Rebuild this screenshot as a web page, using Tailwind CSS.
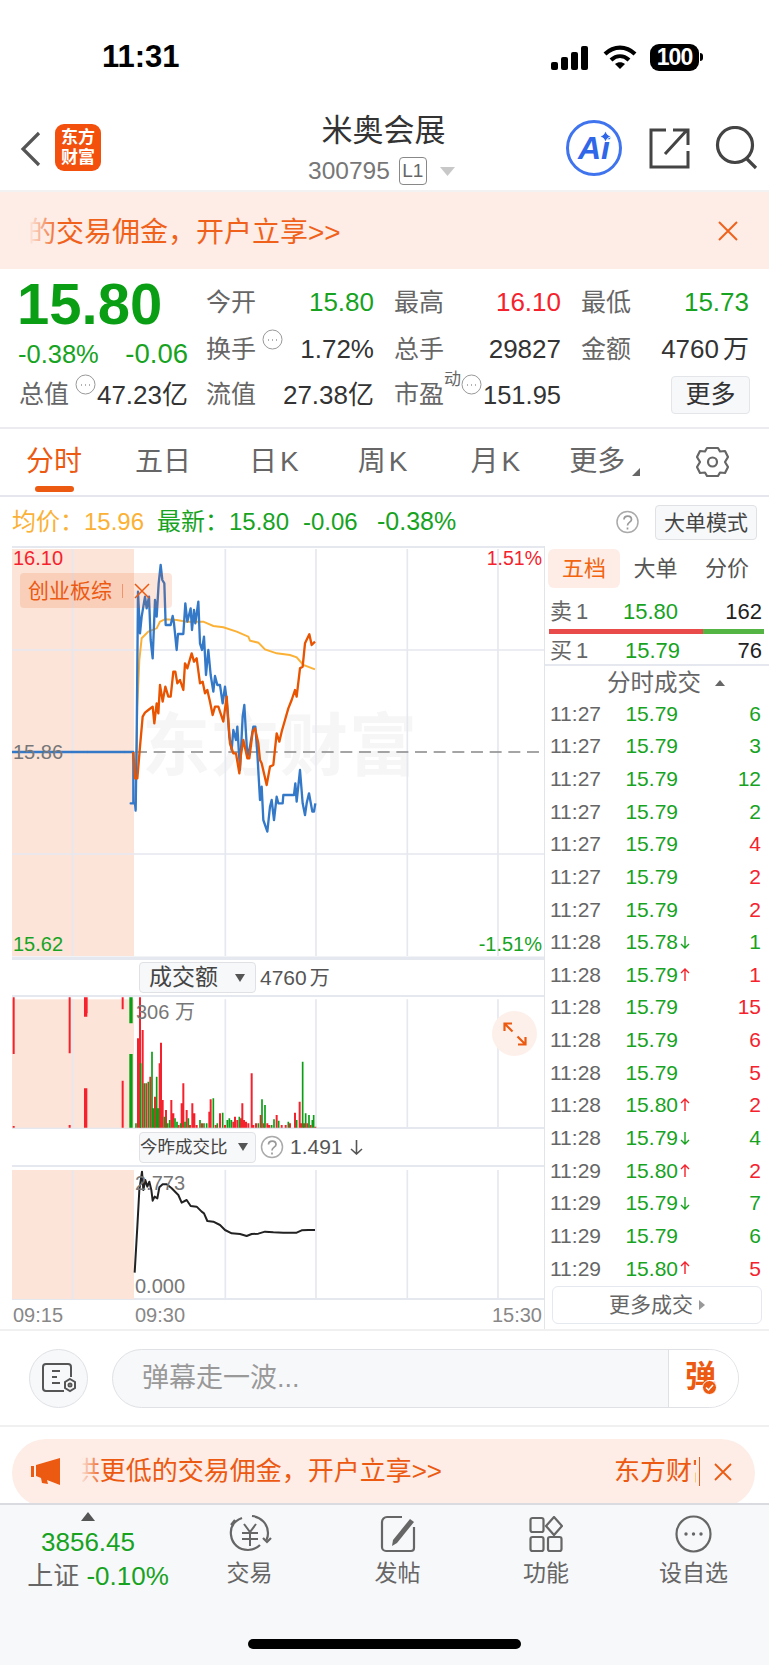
<!DOCTYPE html>
<html lang="zh">
<head>
<meta charset="utf-8">
<script src="https://cdn.jsdelivr.net/npm/@tailwindcss/browser@4"></script>
</head>
<body>
<div class="relative w-[769px] h-[1665px] overflow-hidden bg-white text-[#555] font-['Liberation_Sans','Noto_Sans_CJK_SC',sans-serif]">

<!-- status -->
<div class="h-[105px] flex items-start pt-[38px] pl-[102px]">
  <span class="text-[31px] leading-[38px] font-bold text-black w-[76px]">11:31</span>
  <svg class="ml-[373px] mt-[8px]" width="39" height="24" viewBox="0 0 39 24" fill="#000"><rect x="0" y="16" width="7" height="8" rx="2"/><rect x="10" y="11" width="7" height="13" rx="2"/><rect x="20" y="6" width="7" height="18" rx="2"/><rect x="30" y="0" width="7" height="24" rx="2"/></svg>
  <svg class="ml-[13px] mt-[7px]" width="34" height="25" viewBox="0 0 34 25" fill="none" stroke="#000" stroke-width="4.2"><path d="M2 9c9-8.500 21-8.500 30 0"/><path d="M8 15c5.500-5 12.500-5 18 0"/><path d="M17 24l-5-5c3-2.500 7-2.500 10 0z" fill="#000" stroke="none"/></svg>
  <div class="ml-[13px] mt-[6px] w-[49px] h-[27px] rounded-[9px] bg-black flex items-center justify-center text-white text-[23px] font-bold leading-none tracking-[-1px]">100</div>
  <div class="ml-[1px] mt-[15px] w-[3px] h-[8px] rounded-r bg-black"></div>
</div>

<!-- nav -->
<div class="relative h-[87px] border-b-2 border-[#f2f2f2]">
  <svg class="absolute left-[20px] top-[26px]" width="22" height="36" viewBox="0 0 22 36" fill="none" stroke="#555" stroke-width="3.200"><path d="M19 2L3 18l16 16"/></svg>
  <div class="absolute left-[55px] top-[19px] w-[46px] h-[47px] rounded-[9px] bg-[#f2500c] flex flex-col items-center justify-center text-white text-[17px] leading-[20px] font-bold"><span>东方</span><span>财富</span></div>
  <div class="flex flex-col items-center">
    <div class="text-[31px] leading-[40px] mt-[6px] text-[#333] pr-[2px]">米奥会展</div>
    <div class="flex items-center mt-[6px] text-[24.500px] leading-[28px] text-[#777] pr-[6px]">
      <span>300795</span>
      <span class="ml-[9px] w-[28px] h-[28px] rounded-[4px] border border-[#888] flex items-center justify-center text-[19px] text-[#666]">L1</span>
      <svg class="ml-[13px]" width="15" height="9" viewBox="0 0 15 9" fill="#c8c8c8"><path d="M0 0h15L7.500 9z"/></svg>
    </div>
  </div>
  <div class="absolute left-[566px] top-[15px] w-[56px] h-[56px] rounded-full border-[3px] border-[#3f74ee] flex items-center justify-center text-[#2f67e8] text-[32px] font-bold italic leading-none">Ai</div>
  <svg class="absolute left-[600px] top-[26px]" width="11" height="11" viewBox="0 0 11 11" fill="#2f67e8" stroke="#fff"><path d="M5.500 0l2 3.500 3.500 2-3.500 2-2 3.500-2-3.500L0 5.500l3.500-2z"/></svg>
  <svg class="absolute left-[648px] top-[22px]" width="42" height="42" viewBox="0 0 42 42" fill="none" stroke="#444" stroke-width="3"><path d="M18 3H3v37h37V24"/><path d="M17 27L39 3M25 3h15v15" /></svg>
  <svg class="absolute left-[715px] top-[21px]" width="44" height="44" viewBox="0 0 44 44" fill="none" stroke="#444" stroke-width="3.200"><circle cx="20" cy="19" r="17.500"/><path d="M32 33l9 9"/></svg>
</div>

<!-- banner -->
<div class="relative h-[77px] bg-[#fdede6] overflow-hidden">
  <div class="absolute left-[28px] top-[2px] h-full flex items-center text-[28px] text-[#f0621c] whitespace-nowrap">的交易佣金，开户立享&gt;&gt;</div>
  <div class="absolute left-[28px] top-0 w-[30px] h-full bg-gradient-to-r from-[#fdede6] to-transparent"></div>
  <svg class="absolute left-[717px] top-[28px]" width="22" height="22" viewBox="0 0 22 22" fill="none" stroke="#f0621c" stroke-width="2"><path d="M2 2l18 18M20 2L2 20"/></svg>
</div>

<!-- quote -->
<div class="h-[160px] border-b-2 border-[#ececf0] relative">
  <div class="flex">
    <div class="w-[188px] pl-[17px]">
      <div class="text-[58px] leading-[62px] mt-[4px] font-bold text-[#0a9e14]">15.80</div>
      <div class="flex justify-between items-center h-[30px] text-[25.500px] mt-[4px] text-[#17a31f]"><span class="pl-[1px]">-0.38%</span><span class="text-[27.500px]">-0.06</span></div>
    </div>
    <div class="ml-[18px] w-[544px] mt-[10px]">
      <div class="flex gap-[20px] h-[47px] items-center text-[26px]">
        <div class="w-[168px] flex justify-between items-center"><span class="text-[#666] text-[25px]">今开</span><span class="text-[#17a31f]">15.80</span></div>
        <div class="w-[167px] flex justify-between items-center"><span class="text-[#666] text-[25px]">最高</span><span class="text-[#f5222d]">16.10</span></div>
        <div class="w-[168px] flex justify-between items-center"><span class="text-[#666] text-[25px]">最低</span><span class="text-[#17a31f]">15.73</span></div>
      </div>
      <div class="flex gap-[20px] h-[47px] items-center text-[26px]">
        <div class="w-[168px] flex justify-between items-center"><span class="flex items-start text-[#666] text-[25px]">换手<svg class="ml-[6px] mt-[-2px]" width="21" height="21" viewBox="0 0 21 21" fill="none" stroke="#999"><circle cx="10.500" cy="10.500" r="9.500"/><path d="M6 11h1M10 11h1M14 11h1" stroke-width="1.500"/></svg></span><span class="text-[#333]">1.72%</span></div>
        <div class="w-[167px] flex justify-between items-center"><span class="text-[#666] text-[25px]">总手</span><span class="text-[#333]">29827</span></div>
        <div class="w-[168px] flex justify-between items-center"><span class="text-[#666] text-[25px]">金额</span><span class="text-[#333]">4760<span class="ml-[4px]">万</span></span></div>
      </div>
    </div>
  </div>
  <div class="flex items-center h-[46px] mt-[-1px] text-[26px]">
    <div class="ml-[19px] w-[169px] flex justify-between items-center"><span class="flex items-start text-[#666] text-[25px]">总值<svg class="ml-[6px] mt-[-2px]" width="21" height="21" viewBox="0 0 21 21" fill="none" stroke="#999"><circle cx="10.500" cy="10.500" r="9.500"/><path d="M6 11h1M10 11h1M14 11h1" stroke-width="1.500"/></svg></span><span class="text-[#333]">47.23亿</span></div>
    <div class="ml-[18px] w-[168px] flex justify-between items-center"><span class="text-[#666] text-[25px]">流值</span><span class="text-[#333]">27.38亿</span></div>
    <div class="ml-[20px] w-[167px] flex justify-between items-center"><span class="flex items-start shrink-0 whitespace-nowrap mr-[-2px] text-[#666] text-[25px]">市盈<span class="text-[17px] leading-[20px] mt-[-6px]">动</span><svg class="mt-[-2px] shrink-0" width="21" height="21" viewBox="0 0 21 21" fill="none" stroke="#999"><circle cx="10.500" cy="10.500" r="9.500"/><path d="M6 11h1M10 11h1M14 11h1" stroke-width="1.500"/></svg></span><span class="text-[#333] text-[25.500px]">151.95</span></div>
    <div class="ml-[110px] w-[79px] h-[38px] rounded-[4px] border border-[#e3e5e8] bg-[#f7f8fa] flex items-center justify-center text-[25px] text-[#333]">更多</div>
  </div>
</div>

<!-- tabs -->
<div class="relative h-[68px] border-b-2 border-[#e6e6ee] flex items-center pl-[26px] text-[28px] text-[#666]">
  <span class="text-[#ec5a12]">分时</span>
  <span class="ml-[53px]">五日</span>
  <span class="ml-[58px]">日<span class="ml-[3px]">K</span></span>
  <span class="ml-[59px]">周<span class="ml-[3px]">K</span></span>
  <span class="ml-[63px]">月<span class="ml-[3px]">K</span></span>
  <span class="ml-[49px]">更多</span>
  <svg class="ml-[7px] mt-[20px]" width="8" height="8" viewBox="0 0 8 8" fill="#666"><path d="M8 0v8H0z"/></svg>
  <div class="absolute left-[35px] top-[57px] w-[39px] h-[6px] rounded-full bg-[#ec5a12]"></div>
  <svg class="absolute left-[696px] top-[17px]" width="33" height="32" viewBox="0 0 33 32" fill="none" stroke="#666" stroke-width="2.200"><path d="M11 2h11l2 3.500 5-.5 3 6-3 5 3 5-3 6-5-.5-2 3.500H11l-2-3.500-5 .5-3-6 3-5-3-5 3-6 5 .5z" stroke-linejoin="round"/><circle cx="16.500" cy="16" r="4.500"/></svg>
</div>

<!-- price line -->
<div class="relative h-[49px] flex items-center pl-[12px] text-[24px] whitespace-nowrap">
  <span class="text-[#fbb136] w-[72px]">均价：</span>
  <span class="text-[#fbb136] w-[73px]">15.96</span>
  <span class="text-[#17a31f] w-[72px]">最新：</span>
  <span class="text-[#17a31f] w-[74px]">15.80</span>
  <span class="text-[#17a31f] w-[74px]">-0.06</span>
  <span class="text-[#17a31f] text-[25px]">-0.38%</span>
  <svg class="absolute left-[616px] top-[13px]" width="23" height="24" viewBox="0 0 23 24" fill="none"><circle cx="11.500" cy="12" r="10.500" stroke="#aaa" stroke-width="1.500"/><path d="M8 9.500c0-4.500 7.500-4.500 7.500 0 0 2.800-4 2.500-4 6M11.500 17.500v2" stroke="#999" stroke-width="1.700"/></svg>
  <div class="absolute left-[655px] top-[8px] w-[102px] h-[35px] rounded-[4px] border border-[#dfe1e5] bg-[#f7f8fa] flex items-center justify-center text-[21px] text-[#444]">大单模式</div>
</div>

<!-- main -->
<div class="flex h-[783px]">
  <div class="w-[545px] border-r border-[#e2e4ea] pl-[12px]">
    <!-- price chart -->
    <div class="relative h-[412px] border-t-2 border-[#e6e8f0]">
      <div class="absolute left-[130px] top-[158px] text-[#f6f6f6] text-[68px] leading-[80px] font-bold tracking-[1px] whitespace-nowrap">东方财富</div>
      <svg class="absolute left-[-12px] top-[-2px]" width="545" height="412" viewBox="0 0 545 412" fill="none">
        <g transform="translate(0 -6) scale(.33333)">
          <rect x="36" y="27" width="366" height="1221" fill="#fce4d8"/>
          <path d="M218 27V1248M676 27V1248M948 27V1248M1222 27V1248M1494 27V1248M36 330H1632M36 942H1632M36 1252H1632" stroke="#e6e8f0" stroke-width="5"/>
          <path d="M405 636H1632" stroke="#888" stroke-width="4" stroke-dasharray="36 20"/>
          <polyline points="400,790 407,790 412,500 418,360 425,295 445,275 470,265 480,245 495,238 530,240 560,245 610,245 640,258 670,262 710,275 745,290 750,302 775,308 795,328 830,340 870,345 890,352 910,375 945,388" stroke="#fbb136" stroke-width="6"/>
          <polyline points="36,636 400,636 400,790 392,790 405,790 407,812 410,600 414,155 420,280 425,230 435,170 440,205 447,170 452,300 458,355 465,180 470,230 476,130 482,75 487,120 493,130 497,255 512,255 518,228 522,250 530,330 534,282 550,282 556,190 562,245 572,205 576,270 582,210 586,250 595,185 600,310 606,330 612,290 618,405 625,330 632,405 640,455 645,408 652,435 660,435 668,490 675,440 680,480 688,590 695,630 700,570 708,600 712,560 720,690 728,530 733,495 742,650 750,620 760,560 766,560 772,640 780,780 785,740 790,840 802,875 810,800 815,780 822,840 830,770 835,790 848,790 850,765 882,765 886,730 890,785 900,690 908,790 915,825 920,790 927,760 937,815 942,815 946,790" stroke="#3478c8" stroke-width="7" stroke-linejoin="round"/>
          <path d="M46 636h.1M215 636h.1M262 636h.1M373 636h.1" stroke="#3478c8" stroke-width="13"/>
          <polyline points="400,636 405,715 412,715 420,620 428,530 435,518 445,510 458,500 463,550 470,490 475,520 480,435 488,485 496,440 505,470 512,470 520,395 526,395 532,430 540,420 550,450 555,370 562,385 575,340 582,365 590,355 600,430 608,425 615,460 622,450 630,485 638,525 645,500 655,500 670,545 680,470 690,610 700,640 708,640 718,700 722,650 730,600 742,655 748,655 758,575 765,565 775,610 780,660 785,670 800,735 810,680 820,675 830,580 838,605 845,575 855,540 865,505 875,480 885,450 890,470 900,385 908,380 915,310 928,283 935,315 945,305" stroke="#e85400" stroke-width="7" stroke-linejoin="round"/>
        </g>
      </svg>
      <span class="absolute left-0 top-[-2px] text-[20px] leading-[24px] text-[#f5222d] ml-[1px]">16.10</span>
      <span class="absolute right-[2px] top-[-2px] text-[19.500px] leading-[24px] text-[#f5222d]">1.51%</span>
      <span class="absolute left-0 top-[192px] text-[20px] leading-[24px] text-[#777] ml-[1px]">15.86</span>
      <span class="absolute left-0 top-[384px] text-[20px] leading-[24px] text-[#17a31f] ml-[1px]">15.62</span>
      <span class="absolute right-[2px] top-[384px] text-[20px] leading-[24px] text-[#17a31f]">-1.51%</span>
      <div class="absolute left-[8px] top-[25px] w-[152px] h-[35px] rounded-[4px] bg-[#ec5a12]/15 flex items-center pl-[8px] text-[21px] text-[#ec5a12]">
        <span>创业板综</span><span class="ml-[10px] w-[1px] h-[14px] bg-[#ec5a12]/50"></span>
        <svg class="ml-[11px]" width="16" height="16" viewBox="0 0 16 16" fill="none" stroke="#ec5a12" stroke-width="1.500"><path d="M1 1l14 14M15 1L1 15"/></svg>
      </div>
    </div>
    <!-- head 1 -->
    <div class="h-[39px] border-y-2 border-[#e6e8f0] flex items-center pl-[127px]">
      <div class="w-[117px] h-[31px] rounded-[4px] border border-[#dfe1e5] bg-[#f7f8fa] flex items-center pl-[9px] text-[23px] text-[#444]">成交额<svg class="ml-[17px]" width="10" height="8" viewBox="0 0 10 8" fill="#555"><path d="M0 0h10L5 8z"/></svg></div>
      <span class="ml-[4px] text-[21px] text-[#555]">4760<span class="ml-[3px] text-[20px]">万</span></span>
    </div>
    <!-- volume -->
    <div class="relative h-[132px] border-b-2 border-[#e6e8f0]">
      <svg class="absolute left-[-12px] top-0" width="545" height="132" viewBox="0 0 545 132" fill="none">
        <g transform="translate(0 -47) scale(.33333)">
          <rect x="36" y="148" width="366" height="385" fill="#fce4d8"/>
          <path d="M218 148V533M676 148V533M948 148V533M1222 148V533M1494 148V533" stroke="#e6e8f0" stroke-width="5"/>
          <path d="M41 142V312M41 528V533M209 142V310M209 525V533M368 142V178M368 392V533M420 142V533M414 533V265M428 533V240M439 533V400M451 533V380M465 533V440M479 533V340M483 533V278M488 533V450M498 533V480M514 533V450M520 533V490M536 533V525M550 533V400M545 533V460M560 533V480M570 533V525M577 533V460M583 533V490M590 533V525M606 533V520M628 533V485M632 533V448M647 533V525M660 533V490M675 533V525M700 533V515M705 533V500M712 533V510M723 533V505M727 533V460M732 533V510M738 533V515M745 533V520M755 533V370M760 533V525M768 533V520M782 533V495M791 533V520M802 533V520M808 533V525M830 533V495M845 533V525M857 533V525M870 533V520M885 533V488M899 533V455M903 533V520M912 533V520M922 533V520M932 533V525M946 533V530" stroke="#f5222d" stroke-width="6"/>
          <path d="M257 142V200M257 415V533M258 142V190" stroke="#f5222d" stroke-width="10"/>
          <path d="M393 142V220M393 312V533" stroke="#0a9e14" stroke-width="10"/>
          <path d="M408 533V520M422 533V340M433 533V400M445 533V395M456 533V305M461 533V475M470 533V380M475 533V475M493 533V500M503 533V520M509 533V510M525 533V505M531 533V515M542 533V520M555 533V515M565 533V505M600 533V510M612 533V520M620 533V520M640 533V445M652 533V520M668 533V488M682 533V510M688 533V505M694 533V510M718 533V500M775 533V520M786 533V448M795 533V465M815 533V525M822 533V508M836 533V512M865 533V515M890 533V510M908 533V335M917 533V490M927 533V495M937 533V510M941 533V495" stroke="#0a9e14" stroke-width="5"/>
        </g>
      </svg>
      <span class="absolute left-[124px] top-[3px] text-[20px] leading-[24px] text-[#777]">306 万</span>
      <div class="absolute left-[480px] top-[14px] w-[45px] h-[45px] rounded-full bg-[#fdf0ea] flex items-center justify-center">
        <svg width="24" height="24" viewBox="0 0 24 24" fill="none" stroke="#ec5a12" stroke-width="2.200"><path d="M1.500 9V1.500H9M1.500 1.500l8 8M22.500 15v7.500H15M22.500 22.500l-8-8"/></svg>
      </div>
    </div>
    <!-- head 2 -->
    <div class="h-[38px] border-b-2 border-[#e6e8f0] flex items-center pl-[127px]">
      <div class="w-[117px] h-[31px] rounded-[4px] border border-[#dfe1e5] bg-[#f7f8fa] flex items-center text-[17.500px] text-[#444] whitespace-nowrap">今昨成交比<svg class="ml-[10px]" width="10" height="8" viewBox="0 0 10 8" fill="#555"><path d="M0 0h10L5 8z"/></svg></div>
      <svg class="ml-[4px]" width="24" height="24" viewBox="0 0 23 24" fill="none"><circle cx="11.500" cy="12" r="10.500" stroke="#aaa" stroke-width="1.500"/><path d="M8 9.500c0-4.500 7.500-4.500 7.500 0 0 2.800-4 2.500-4 6M11.500 17.500v2" stroke="#999" stroke-width="1.700"/></svg>
      <span class="ml-[6px] text-[21px] text-[#555]">1.491</span>
      <svg class="ml-[7px]" width="13" height="16" viewBox="0 0 13 16" fill="none" stroke="#555" stroke-width="1.600"><path d="M6.500 1v14M1 10l5.500 5 5.500-5"/></svg>
    </div>
    <!-- ratio -->
    <div class="relative h-[133px] border-b-2 border-[#e6e8f0]">
      <svg class="absolute left-[-12px] top-0" width="545" height="133" viewBox="0 0 545 133" fill="none">
        <g transform="translate(0 -217) scale(.33333)">
          <rect x="36" y="660" width="366" height="387" fill="#fce4d8"/>
          <path d="M218 660V1047M676 660V1047M948 660V1047M1222 660V1047M1494 660V1047" stroke="#e6e8f0" stroke-width="5"/>
          <polyline points="404,968 412,830 418,720 426,665 430,720 436,690 442,710 448,695 454,720 458,752 464,740 472,745 478,712 488,703 500,703 515,715 535,735 545,758 560,750 572,768 590,770 605,785 612,790 622,813 640,815 660,825 675,840 695,850 720,852 740,858 755,852 775,851 795,845 820,847 850,848 890,848 905,841 925,840 945,840" stroke="#222" stroke-width="6" stroke-linejoin="round"/>
        </g>
      </svg>
      <span class="absolute left-[123px] top-[4px] text-[20px] leading-[24px] text-[#777]">2.773</span>
      <span class="absolute left-[123px] top-[107px] text-[20px] leading-[24px] text-[#777]">0.000</span>
    </div>
    <!-- axis -->
    <div class="h-[29px] flex items-center text-[20px] text-[#888]">
      <span class="ml-[1px] w-[122px]">09:15</span><span>09:30</span><span class="ml-auto mr-[2px]">15:30</span>
    </div>
  </div>

  <!-- right panel -->
  <div class="flex-1 relative">
    <div class="h-[118px]">
      <div class="flex pt-[3px] pl-[3px] text-[22px] leading-[39px] text-center">
        <div class="w-[72px] h-[39px] rounded-[6px] bg-[#fdede6] text-[#f2640f]">五档</div>
        <div class="w-[71px] text-[#555]">大单</div>
        <div class="w-[72px] text-[#555]">分价</div>
      </div>
      <div class="flex items-center h-[24px] mt-[11px] pl-[5px] pr-[7px] text-[22px]"><span class="w-[73px] text-[#666]">卖<span class="ml-[4px]">1</span></span><span class="text-[#17a31f]">15.80</span><span class="ml-auto text-[#222]">162</span></div>
      <div class="mx-[4px] mt-[6px] w-[215px] h-[5px] flex"><div class="w-[154px] bg-[#e94b4b]"></div><div class="flex-1 bg-[#55b544]"></div></div>
      <div class="flex items-center h-[24px] mt-[4px] pl-[5px] pr-[7px] text-[22px]"><span class="w-[75px] text-[#666]">买<span class="ml-[4px]">1</span></span><span class="text-[#17a31f]">15.79</span><span class="ml-auto text-[#222]">76</span></div>
    </div>
    <div class="h-[33px] border-t-2 border-[#e6e8f0] flex items-start justify-center pt-[3px] pl-[18px] text-[23.500px] leading-[28px] text-[#666]">
      <span>分时成交</span><svg class="ml-[14px] mt-[11px]" width="10" height="6" viewBox="0 0 10 6" fill="#666"><path d="M5 0l5 6H0z"/></svg>
    </div>
    <div class="text-[21px] pl-[5px] pr-[8px]">
      <div class="flex items-center h-[32.670px]"><span class="w-[75px] text-[#666]">11:27</span><span class="w-[53px] text-right text-[#17a31f]">15.79</span><span class="ml-auto text-[#17a31f]">6</span></div>
      <div class="flex items-center h-[32.670px]"><span class="w-[75px] text-[#666]">11:27</span><span class="w-[53px] text-right text-[#17a31f]">15.79</span><span class="ml-auto text-[#17a31f]">3</span></div>
      <div class="flex items-center h-[32.670px]"><span class="w-[75px] text-[#666]">11:27</span><span class="w-[53px] text-right text-[#17a31f]">15.79</span><span class="ml-auto text-[#17a31f]">12</span></div>
      <div class="flex items-center h-[32.670px]"><span class="w-[75px] text-[#666]">11:27</span><span class="w-[53px] text-right text-[#17a31f]">15.79</span><span class="ml-auto text-[#17a31f]">2</span></div>
      <div class="flex items-center h-[32.670px]"><span class="w-[75px] text-[#666]">11:27</span><span class="w-[53px] text-right text-[#17a31f]">15.79</span><span class="ml-auto text-[#f5222d]">4</span></div>
      <div class="flex items-center h-[32.670px]"><span class="w-[75px] text-[#666]">11:27</span><span class="w-[53px] text-right text-[#17a31f]">15.79</span><span class="ml-auto text-[#f5222d]">2</span></div>
      <div class="flex items-center h-[32.670px]"><span class="w-[75px] text-[#666]">11:27</span><span class="w-[53px] text-right text-[#17a31f]">15.79</span><span class="ml-auto text-[#f5222d]">2</span></div>
      <div class="flex items-center h-[32.670px]"><span class="w-[75px] text-[#666]">11:28</span><span class="w-[53px] text-right text-[#17a31f]">15.78</span><svg class="ml-[2px]" width="10" height="14" viewBox="0 0 10 14" fill="none" stroke="#17a31f" stroke-width="1.400"><path d="M5 1v12M1 9l4 4 4-4"/></svg><span class="ml-auto text-[#17a31f]">1</span></div>
      <div class="flex items-center h-[32.670px]"><span class="w-[75px] text-[#666]">11:28</span><span class="w-[53px] text-right text-[#17a31f]">15.79</span><svg class="ml-[2px]" width="10" height="14" viewBox="0 0 10 14" fill="none" stroke="#f5222d" stroke-width="1.400"><path d="M5 13V1M1 5l4-4 4 4"/></svg><span class="ml-auto text-[#f5222d]">1</span></div>
      <div class="flex items-center h-[32.670px]"><span class="w-[75px] text-[#666]">11:28</span><span class="w-[53px] text-right text-[#17a31f]">15.79</span><span class="ml-auto text-[#f5222d]">15</span></div>
      <div class="flex items-center h-[32.670px]"><span class="w-[75px] text-[#666]">11:28</span><span class="w-[53px] text-right text-[#17a31f]">15.79</span><span class="ml-auto text-[#f5222d]">6</span></div>
      <div class="flex items-center h-[32.670px]"><span class="w-[75px] text-[#666]">11:28</span><span class="w-[53px] text-right text-[#17a31f]">15.79</span><span class="ml-auto text-[#f5222d]">5</span></div>
      <div class="flex items-center h-[32.670px]"><span class="w-[75px] text-[#666]">11:28</span><span class="w-[53px] text-right text-[#17a31f]">15.80</span><svg class="ml-[2px]" width="10" height="14" viewBox="0 0 10 14" fill="none" stroke="#f5222d" stroke-width="1.400"><path d="M5 13V1M1 5l4-4 4 4"/></svg><span class="ml-auto text-[#f5222d]">2</span></div>
      <div class="flex items-center h-[32.670px]"><span class="w-[75px] text-[#666]">11:28</span><span class="w-[53px] text-right text-[#17a31f]">15.79</span><svg class="ml-[2px]" width="10" height="14" viewBox="0 0 10 14" fill="none" stroke="#17a31f" stroke-width="1.400"><path d="M5 1v12M1 9l4 4 4-4"/></svg><span class="ml-auto text-[#17a31f]">4</span></div>
      <div class="flex items-center h-[32.670px]"><span class="w-[75px] text-[#666]">11:29</span><span class="w-[53px] text-right text-[#17a31f]">15.80</span><svg class="ml-[2px]" width="10" height="14" viewBox="0 0 10 14" fill="none" stroke="#f5222d" stroke-width="1.400"><path d="M5 13V1M1 5l4-4 4 4"/></svg><span class="ml-auto text-[#f5222d]">2</span></div>
      <div class="flex items-center h-[32.670px]"><span class="w-[75px] text-[#666]">11:29</span><span class="w-[53px] text-right text-[#17a31f]">15.79</span><svg class="ml-[2px]" width="10" height="14" viewBox="0 0 10 14" fill="none" stroke="#17a31f" stroke-width="1.400"><path d="M5 1v12M1 9l4 4 4-4"/></svg><span class="ml-auto text-[#17a31f]">7</span></div>
      <div class="flex items-center h-[32.670px]"><span class="w-[75px] text-[#666]">11:29</span><span class="w-[53px] text-right text-[#17a31f]">15.79</span><span class="ml-auto text-[#17a31f]">6</span></div>
      <div class="flex items-center h-[32.670px]"><span class="w-[75px] text-[#666]">11:29</span><span class="w-[53px] text-right text-[#17a31f]">15.80</span><svg class="ml-[2px]" width="10" height="14" viewBox="0 0 10 14" fill="none" stroke="#f5222d" stroke-width="1.400"><path d="M5 13V1M1 5l4-4 4 4"/></svg><span class="ml-auto text-[#f5222d]">5</span></div>
    </div>
    <div class="absolute left-[7px] top-[740px] w-[210px] h-[38px] rounded-[6px] border border-[#e6e8f0] flex items-center justify-center text-[21px] text-[#666]">更多成交<svg class="ml-[6px]" width="6" height="10" viewBox="0 0 6 10" fill="#999"><path d="M0 0l6 5-6 5z"/></svg></div>
  </div>
</div>

<!-- input row -->
<div class="h-[98px] border-y-2 border-[#f0f0f0] flex items-center pl-[29px]">
  <div class="w-[59px] h-[59px] rounded-full border border-[#dfe1e5] bg-[#f7f8fa] flex items-center justify-center">
    <svg width="36" height="30" viewBox="0 0 36 30" fill="none" stroke="#555" stroke-width="2"><path d="M30 14V4a3 3 0 0 0-3-3H5a3 3 0 0 0-3 3v21a3 3 0 0 0 3 3h18"/><path d="M11 8h8M11 14h5M11 20h8"/><path d="M29 16l5 3v6l-5 3-5-3v-6z"/><circle cx="29" cy="22" r="1.500"/></svg>
  </div>
  <div class="ml-[24px] w-[627px] h-[59px] rounded-full border border-[#dfe1e5] bg-[#f7f8fa] flex items-center overflow-hidden">
    <span class="ml-[29px] text-[27px] text-[#999]">弹幕走一波...</span>
    <div class="ml-auto w-[70px] h-full bg-white border-l border-[#dfe1e5] relative">
      <span class="absolute left-[16px] top-[7px] text-[31px] leading-[40px] font-bold text-[#ec5a12]">弹</span>
      <svg class="absolute left-[33px] top-[30px]" width="15" height="15" viewBox="0 0 15 15"><circle cx="7.500" cy="7.500" r="7" fill="#ec5a12" stroke="#fff"/><path d="M4 7.500l2.500 2.500 4.500-5" fill="none" stroke="#fff" stroke-width="1.500"/></svg>
    </div>
  </div>
</div>

<!-- ad -->
<div class="h-[76px] pl-[12px] pr-[14px] pt-[12px] overflow-hidden">
  <div class="relative w-[743px] h-[68px] rounded-[34px] bg-[#fdede6] overflow-hidden">
    <svg class="absolute left-[19px] top-[19px]" width="30" height="27" viewBox="0 0 30 27" fill="#ec5a12"><rect x="0" y="8" width="3" height="11"/><path d="M5 7l24-7v27L16 22l1 4-6-1-1-5-5-2z"/></svg>
    <div class="absolute left-[70px] top-[6px] w-[360px] h-[52px] overflow-hidden flex items-center justify-end text-[26px] text-[#ec5a12] whitespace-nowrap">供更低的交易佣金，开户立享&gt;&gt;</div>
    <div class="absolute left-[68px] top-0 w-[22px] h-[64px] bg-gradient-to-r from-[#fdede6] to-transparent"></div>
    <div class="absolute left-[602px] top-[6px] w-[82px] h-[52px] overflow-hidden flex items-center text-[26px] text-[#ec5a12] whitespace-nowrap">东方财富</div>
    <div class="absolute left-[687px] top-[18px] w-[1px] h-[29px] bg-[#ec5a12]"></div>
    <svg class="absolute left-[702px] top-[24px]" width="18" height="18" viewBox="0 0 18 18" fill="none" stroke="#ec5a12" stroke-width="1.800"><path d="M1 1l16 16M17 1L1 17"/></svg>
  </div>
</div>

<!-- bottom nav -->
<div class="relative h-[162px] bg-[#f7f8fa] border-t-2 border-[#d9dbe0] flex items-start text-[#666]">
  <div class="w-[176px] flex flex-col items-center">
    <svg class="mt-[7px]" width="14" height="9" viewBox="0 0 14 9" fill="#555"><path d="M7 0l7 9H0z"/></svg>
    <span class="mt-[6px] text-[26px] leading-[30px] text-[#17a31f]">3856.45</span>
    <span class="mt-[1px] ml-[20px] text-[26px] leading-[36px] whitespace-nowrap">上证 <span class="text-[#17a31f]">-0.10%</span></span>
  </div>
  <div class="w-[147px] flex flex-col items-center">
    <svg class="mt-[10px]" width="44" height="38" viewBox="0 0 44 38" fill="none" stroke="#666" stroke-width="2.200"><path d="M14 3C6 6 2 12 3 20c1 9 8 15 17 15 5 0 9-2 12-5"/><path d="M24 1c9 1 16 8 16 17 0 3-.500 5-1.500 7"/><path d="M3 10l4-5M35 23l4 4 4-4"/><path d="M16 9l6 8 6-8M14 18h16M14 24h16M22 17v14" stroke-width="2"/></svg>
    <span class="mt-[5px] text-[23px] leading-[30px]">交易</span>
  </div>
  <div class="w-[149px] flex flex-col items-center">
    <svg class="mt-[10px]" width="36" height="38" viewBox="0 0 36 38" fill="none" stroke="#666" stroke-width="2.200"><path d="M22 2H7a5 5 0 0 0-5 5v25a4 4 0 0 0 4 4h25a3 3 0 0 0 3-3V12"/><path d="M13 25L30 4l4 3-17 21-5 3z" fill="#666" stroke="none"/></svg>
    <span class="mt-[5px] text-[23px] leading-[30px]">发帖</span>
  </div>
  <div class="w-[148px] flex flex-col items-center">
    <svg class="mt-[11px]" width="34" height="37" viewBox="0 0 34 37" fill="none" stroke="#666" stroke-width="2.200"><rect x="1.500" y="2" width="13" height="14" rx="2"/><path d="M25 1l8 9-8 9-8-9z"/><rect x="1.500" y="21" width="13" height="14" rx="2"/><rect x="19" y="21" width="13.500" height="14" rx="2"/></svg>
    <span class="mt-[5px] text-[23px] leading-[30px]">功能</span>
  </div>
  <div class="w-[147px] flex flex-col items-center">
    <svg class="mt-[10px]" width="37" height="38" viewBox="0 0 37 38" fill="none" stroke="#666" stroke-width="2.200"><ellipse cx="18.500" cy="19" rx="17" ry="17.500"/><circle cx="11" cy="19" r="1.700" fill="#666" stroke="none"/><circle cx="18.500" cy="19" r="1.700" fill="#666" stroke="none"/><circle cx="26" cy="19" r="1.700" fill="#666" stroke="none"/></svg>
    <span class="mt-[5px] text-[23px] leading-[30px]">设自选</span>
  </div>
  <div class="absolute left-[248px] top-[134px] w-[273px] h-[10px] rounded-full bg-black"></div>
</div>
</div>
</body>
</html>
